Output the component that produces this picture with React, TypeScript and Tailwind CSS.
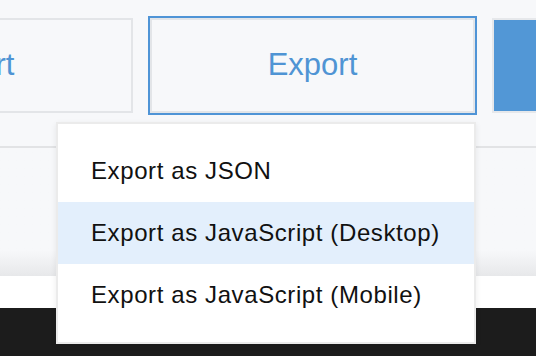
const items = ["Export as JSON", "Export as JavaScript (Desktop)", "Export as JavaScript (Mobile)"];

export default function App() {
  return (
    <div className="relative h-[356px] w-[536px] overflow-hidden bg-[#f7f8fa]" style={{ fontFamily: '"Liberation Sans", Arial, sans-serif' }}>
      {/* toolbar buttons */}
      <div className="flex gap-[17px] pt-[18px] -ml-[192px]">
        <button className="h-[95px] w-[325px] shrink-0 border-2 border-[#e3e5e8] bg-[#f7f8fa] text-[31px] text-[#4f94d4]">Import</button>
        <button className="h-[95px] w-[325px] shrink-0 border-2 border-[#e3e5e8] bg-[#f7f8fa] text-[31px] text-[#4f94d4] shadow-[0_0_0_2px_#4f94d6]">Export</button>
        <button className="h-[95px] w-[325px] shrink-0 border-2 border-[#e6e8eb] bg-[#5297d6]"></button>
      </div>
      <div className="mt-[33px] h-[2px] bg-[#e2e3e5]" />
      <div className="h-[128px] bg-gradient-to-b from-[#f7f8fa] from-80% to-[#e7e8ea]" />
      <div className="h-[32px] bg-white" />
      <div className="h-[48px] bg-[#1c1c1c]" />

      {/* dropdown menu */}
      <div className="absolute left-[56px] top-[122px] w-[420px] border-2 border-[#ebebeb] bg-white py-[16px] shadow-[0_2px_6px_rgba(0,0,0,0.08)]">
        {items.map((t, i) => (
          <div key={t} className={`flex h-[62px] items-center pl-[33px] text-[24px] tracking-[0.6px] text-[#111] ${i === 1 ? "bg-[#e3effc]" : ""}`}>
            {t}
          </div>
        ))}
      </div>
    </div>
  );
}
